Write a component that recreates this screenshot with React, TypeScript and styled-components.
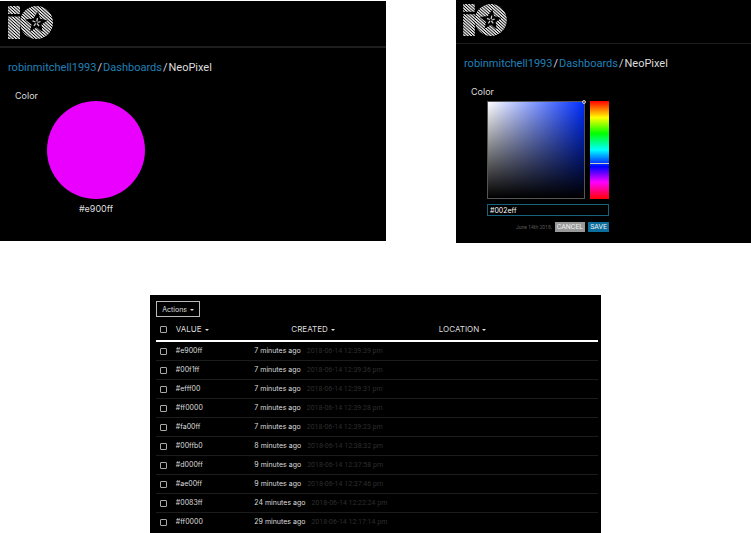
import React, { useId, useState } from "react";
import styled, { createGlobalStyle } from "styled-components";

const GlobalStyle = createGlobalStyle`
  * { box-sizing: border-box; }
  body {
    margin: 0;
    background: #fff;
    color: #ddd;
    font-family: Inter, "Open Sans", sans-serif;
    font-size: 8px;
  }
  button, input { font-family: inherit; }
`;

const Page = styled.main`
  display: flex;
  flex-direction: column;
  gap: 52px;
`;

const Previews = styled.div`
  display: grid;
  grid-template-columns: 386fr 295fr;
  column-gap: 70px;
  align-items: start;
`;

const Panel = styled.section<{ $compact?: boolean }>`
  background: #000;
  margin-top: ${(p) => (p.$compact ? 0 : 1)}px;
  padding-bottom: ${(p) => (p.$compact ? 11 : 26)}px;
`;

const Header = styled.header<{ $compact?: boolean }>`
  display: flex;
  padding: ${(p) => (p.$compact ? "4px 7px 7px" : "5px 8px 7px")};
  border-bottom: ${(p) => (p.$compact ? 1 : 2)}px solid #1e1e1e;
`;

const Breadcrumb = styled.nav`
  display: flex;
  gap: 1px;
  padding: 12px 8px 0;
  font-family: Roboto, sans-serif;
  font-size: 11px;
  line-height: 16px;
  white-space: nowrap;
`;

const Crumb = styled.a`
  color: #2080b8;
  text-decoration: none;
`;

const Block = styled.div`
  padding: 15px 15px 0;
`;

const BlockTitle = styled.h2`
  margin: 0;
  font-size: 9px;
  font-weight: 400;
  line-height: 10px;
`;

const Swatch = styled.figure`
  display: flex;
  flex-direction: column;
  align-items: center;
  gap: 4px;
  width: 98px;
  margin: 0 0 0 32px;
`;

const Disc = styled.div`
  width: 98px;
  height: 98px;
  border-radius: 50%;
  background: #e900ff;
`;

const SwatchName = styled.figcaption`
  font-size: 9px;
  line-height: 12px;
`;

const Picker = styled.form`
  display: grid;
  grid-template-columns: 98px 19px;
  gap: 5px;
  width: 122px;
  margin: 4px 0 0 16px;
`;

const Field = styled.div`
  position: relative;
  height: 98px;
  border: 1px solid #555;
  background: linear-gradient(to top, #000, transparent),
    linear-gradient(to right, #fff, #002eff);
`;

const FieldHandle = styled.span`
  position: absolute;
  top: -2px;
  right: -2px;
  width: 4px;
  height: 4px;
  border: 1px solid #ccc;
  border-radius: 50%;
`;

const Hue = styled.div`
  position: relative;
  height: 98px;
  background: linear-gradient(#f00, #ff0 17%, #0f0 33%, #0ff 50%, #00f 67%, #f0f 83%, #f00);
`;

const HueHandle = styled.span`
  position: absolute;
  top: 62px;
  left: 0;
  right: 0;
  height: 1px;
  background: #ccc;
`;

const HexInput = styled.input`
  grid-column: 1 / -1;
  width: 100%;
  height: 12px;
  padding: 0 2px;
  border: 1px solid #17627d;
  background: #000;
  color: #fff;
  font-size: 7px;
  outline: none;
`;

const PickerFooter = styled.div`
  grid-column: 1 / -1;
  display: flex;
  justify-content: flex-end;
  align-items: center;
  gap: 3px;
  margin-top: 1px;
  font-family: Roboto, sans-serif;
`;

const PickerDate = styled.time`
  color: #5a5a5a;
  font-size: 5px;
  white-space: nowrap;
`;

const PickerButton = styled.button<{ $primary?: boolean }>`
  height: 10px;
  padding: 0 2px;
  border: 0;
  background: ${(p) => (p.$primary ? "#0b6e9d" : "#999")};
  color: #eee;
  font-size: 7px;
  line-height: 10px;
`;

const DataPanel = styled.section`
  width: 60%;
  margin-left: 20%;
  padding: 6px 3px 4px 6px;
  background: #000;
`;

const Caret = styled.span`
  display: inline-block;
  margin-left: 3px;
  border: 2px solid transparent;
  border-top-color: currentColor;
  border-bottom: 0;
  vertical-align: 1px;
`;

const ActionsButton = styled.button`
  display: block;
  height: 16px;
  padding: 0 5px;
  border: 1px solid #bbb;
  background: #000;
  color: #ddd;
  font-size: 7px;
`;

const Table = styled.table`
  width: 100%;
  border-collapse: collapse;
  table-layout: fixed;
`;

const Row = styled.tr`
  height: 19px;
  border-top: 1px solid #1c1c1c;
`;

const HeadRow = styled.tr`
  height: 24px;
  border-bottom: 2px solid #fff;
`;

const Heading = styled.th<{ $width: number; $indent?: number }>`
  width: ${(p) => p.$width}%;
  padding: 0 0 0 ${(p) => p.$indent ?? 0}px;
  text-align: left;
  font-size: 8px;
  font-weight: 400;
  line-height: 12px;
`;

const Cell = styled.td<{ $indent?: number }>`
  padding: 0 0 0 ${(p) => p.$indent ?? 0}px;
  font-size: 7px;
  line-height: 12px;
  white-space: nowrap;
`;

const Tick = styled.input`
  appearance: none;
  display: block;
  width: 7px;
  height: 7px;
  margin: 1px 0 0 4px;
  border: 1px solid #aaa;
  border-radius: 1px;
  background: #000;
  &:checked { background: #ddd; }
`;

const Stamp = styled.time`
  margin-left: 6px;
  color: #2e2e2e;
  font-family: Roboto, sans-serif;
`;

function Logo({ size }: { size: number }) {
  const id = useId();
  return (
    <svg width={Math.round((size * 45) / 33)} height={size} viewBox="0 0 45 33" role="img" aria-label="IO">
      <defs>
        <pattern id={id} width="2.25" height="2.25" patternUnits="userSpaceOnUse" patternTransform="rotate(42)">
          <rect width="2.25" height="1.5" fill="#dcdcdc" />
        </pattern>
      </defs>
      <g fill={`url(#${id})`}>
        <path d="M0 0H12V8H0Z M0 10.500H12V33H0Z" />
        <circle cx="28.500" cy="16.500" r="16.500" />
      </g>
      <path
        d="M30 5.500 32 12.500 39.500 14.500 33.500 18.500 34.500 26 28.500 21.500 22 25.500 23.500 18.500 17 13.500 25.500 12.500Z"
        fill="#000"
      />
      <g stroke="#ccc" strokeWidth="1.300">
        <path d="M28.800 15.500 29.500 12 M29.500 16.500 32.500 15.500 M29 17.500 31 20 M27.700 17.300 26 20 M27.500 16 24.500 14.800" />
      </g>
    </svg>
  );
}

function Trail() {
  return (
    <Breadcrumb aria-label="Breadcrumb">
      <Crumb href="#user">robinmitchell1993</Crumb>
      <span>/</span>
      <Crumb href="#dashboards">Dashboards</Crumb>
      <span>/</span>
      <span>NeoPixel</span>
    </Breadcrumb>
  );
}

const records = [
  ["#e900ff", "7 minutes ago", "2018-06-14 12:39:39 pm"],
  ["#00f1ff", "7 minutes ago", "2018-06-14 12:39:36 pm"],
  ["#efff00", "7 minutes ago", "2018-06-14 12:39:31 pm"],
  ["#ff0000", "7 minutes ago", "2018-06-14 12:39:28 pm"],
  ["#fa00ff", "7 minutes ago", "2018-06-14 12:39:23 pm"],
  ["#00ffb0", "8 minutes ago", "2018-06-14 12:38:32 pm"],
  ["#d000ff", "9 minutes ago", "2018-06-14 12:37:58 pm"],
  ["#ae00ff", "9 minutes ago", "2018-06-14 12:37:46 pm"],
  ["#0083ff", "24 minutes ago", "2018-06-14 12:22:24 pm"],
  ["#ff0000", "29 minutes ago", "2018-06-14 12:17:14 pm"],
];

export default function App() {
  const [hex, setHex] = useState("#002eff");
  return (
    <>
      <GlobalStyle />
      <Page>
        <Previews>
          <Panel>
            <Header><Logo size={33} /></Header>
            <Trail />
            <Block>
              <BlockTitle>Color</BlockTitle>
              <Swatch>
                <Disc />
                <SwatchName>#e900ff</SwatchName>
              </Swatch>
            </Block>
          </Panel>
          <Panel $compact>
            <Header $compact><Logo size={32} /></Header>
            <Trail />
            <Block>
              <BlockTitle>Color</BlockTitle>
              <Picker onSubmit={(e) => e.preventDefault()}>
                <Field><FieldHandle /></Field>
                <Hue><HueHandle /></Hue>
                <HexInput aria-label="Color" value={hex} onChange={(e) => setHex(e.target.value)} />
                <PickerFooter>
                  <PickerDate>June 14th 2018,</PickerDate>
                  <PickerButton type="button">CANCEL</PickerButton>
                  <PickerButton type="submit" $primary>SAVE</PickerButton>
                </PickerFooter>
              </Picker>
            </Block>
          </Panel>
        </Previews>
        <DataPanel>
          <ActionsButton type="button">Actions<Caret /></ActionsButton>
          <Table>
            <thead>
              <HeadRow>
                <Heading $width={4}><Tick type="checkbox" aria-label="Select all" /></Heading>
                <Heading $width={18} $indent={2}>VALUE<Caret /></Heading>
                <Heading $width={42} $indent={38}>CREATED<Caret /></Heading>
                <Heading $width={36}>LOCATION<Caret /></Heading>
              </HeadRow>
            </thead>
            <tbody>
              {records.map(([value, ago, stamp]) => (
                <Row key={stamp}>
                  <Cell><Tick type="checkbox" aria-label={`Select ${value}`} /></Cell>
                  <Cell $indent={2}>{value}</Cell>
                  <Cell $indent={1}>{ago}<Stamp>{stamp}</Stamp></Cell>
                  <Cell />
                </Row>
              ))}
            </tbody>
          </Table>
        </DataPanel>
      </Page>
    </>
  );
}
